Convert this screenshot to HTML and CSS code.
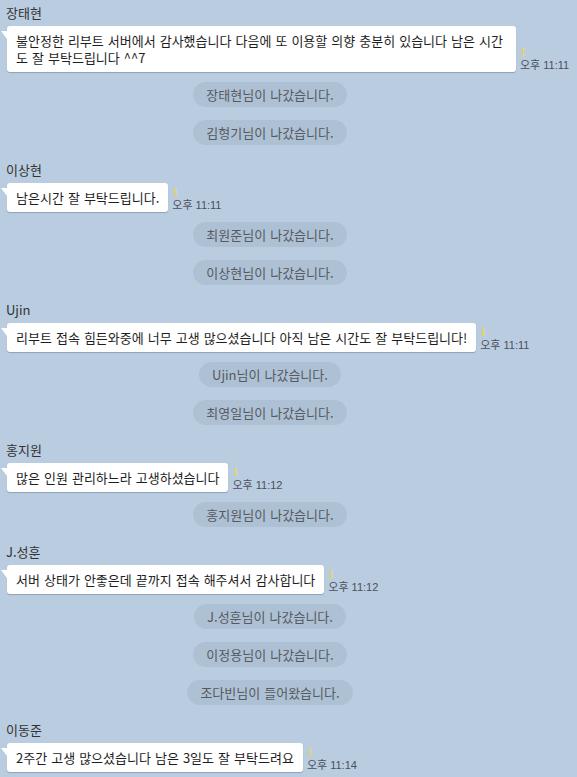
FILE: index.html
```html
<!DOCTYPE html>
<html lang="ko">
  <head>
    <meta charset="UTF-8" />
    <title>채팅방</title>
    <link rel="stylesheet" href="styles.css">
  </head>
  <body>
    <div class="chat">
      <div class="msg">
        <div class="name">장태현</div>
        <div class="row">
          <div class="bubble">불안정한 리부트 서버에서 감사했습니다 다음에 또 이용할 의향 충분히 있습니다 남은 시간도 잘 부탁드립니다 ^^7</div>
          <div class="meta"><span class="unread">1</span><span class="time">오후 11:11</span></div>
        </div>
      </div>
      <div class="notice">장태현님이 나갔습니다.</div>
      <div class="notice">김형기님이 나갔습니다.</div>

      <div class="msg">
        <div class="name">이상현</div>
        <div class="row">
          <div class="bubble">남은시간 잘 부탁드립니다.</div>
          <div class="meta"><span class="unread">1</span><span class="time">오후 11:11</span></div>
        </div>
      </div>
      <div class="notice">최원준님이 나갔습니다.</div>
      <div class="notice">이상현님이 나갔습니다.</div>

      <div class="msg">
        <div class="name">Ujin</div>
        <div class="row">
          <div class="bubble">리부트 접속 힘든와중에 너무 고생 많으셨습니다 아직 남은 시간도 잘 부탁드립니다!</div>
          <div class="meta"><span class="unread">1</span><span class="time">오후 11:11</span></div>
        </div>
      </div>
      <div class="notice">Ujin님이 나갔습니다.</div>
      <div class="notice">최영일님이 나갔습니다.</div>

      <div class="msg">
        <div class="name">홍지원</div>
        <div class="row">
          <div class="bubble">많은 인원 관리하느라 고생하셨습니다</div>
          <div class="meta"><span class="unread">1</span><span class="time">오후 11:12</span></div>
        </div>
      </div>
      <div class="notice">홍지원님이 나갔습니다.</div>

      <div class="msg">
        <div class="name">J.성훈</div>
        <div class="row">
          <div class="bubble">서버 상태가 안좋은데 끝까지 접속 해주셔서 감사합니다</div>
          <div class="meta"><span class="unread">1</span><span class="time">오후 11:12</span></div>
        </div>
      </div>
      <div class="notice">J.성훈님이 나갔습니다.</div>
      <div class="notice">이정용님이 나갔습니다.</div>
      <div class="notice">조다빈님이 들어왔습니다.</div>

      <div class="msg">
        <div class="name">이동준</div>
        <div class="row">
          <div class="bubble">2주간 고생 많으셨습니다 남은 3일도 잘 부탁드려요</div>
          <div class="meta"><span class="unread">1</span><span class="time">오후 11:14</span></div>
        </div>
      </div>
    </div>
  </body>
</html>
```

FILE: styles.css
```css
* {
  box-sizing: border-box;
}
body {
  margin: 0;
  background: #bacde0;
  font-family: 'Noto Sans CJK KR', 'Noto Sans', sans-serif;
  font-size: 13px;
  color: #222;
  word-spacing: 0.4px;
  min-height: 100vh;
}
.chat {
  padding: 5px 0 0 7px;
  display: flex;
  flex-direction: column;
}
.msg + .notice {
  margin-top: 10px;
}
.notice + .notice {
  margin-top: 13px;
}
.notice + .msg {
  margin-top: 17px;
}
.name {
  margin-left: -1px;
  line-height: 16px;
  color: #333;
  margin-bottom: 5px;
}
.row {
  display: flex;
  align-items: flex-end;
  gap: 4px;
}
.bubble {
  position: relative;
  background: #fff;
  color: #1e1e1e;
  max-width: 509px;
  padding: 6px 9px;
  line-height: 17px;
  border-radius: 3px;
  box-shadow: 0 1px 1px rgba(60, 80, 110, 0.35);
}
.bubble::before {
  content: "";
  position: absolute;
  left: -6px;
  top: 5px;
  border-top: 8px solid #fff;
  border-left: 6px solid transparent;
}
.meta {
  display: flex;
  flex-direction: column;
  flex-shrink: 0;
  font-family: 'Liberation Sans', 'Noto Sans CJK KR', sans-serif;
  font-size: 11px;
  word-spacing: 0;
}
.unread {
  color: #f2d648;
  line-height: 12px;
}
.time {
  color: #4c4f5e;
  line-height: 14px;
}
.notice {
  align-self: center;
  margin: 0 37px 0 -7px;
  background: #aec1d4;
  color: #555a62;
  line-height: 17px;
  padding: 4px 13px;
  border-radius: 13px;
}
```
